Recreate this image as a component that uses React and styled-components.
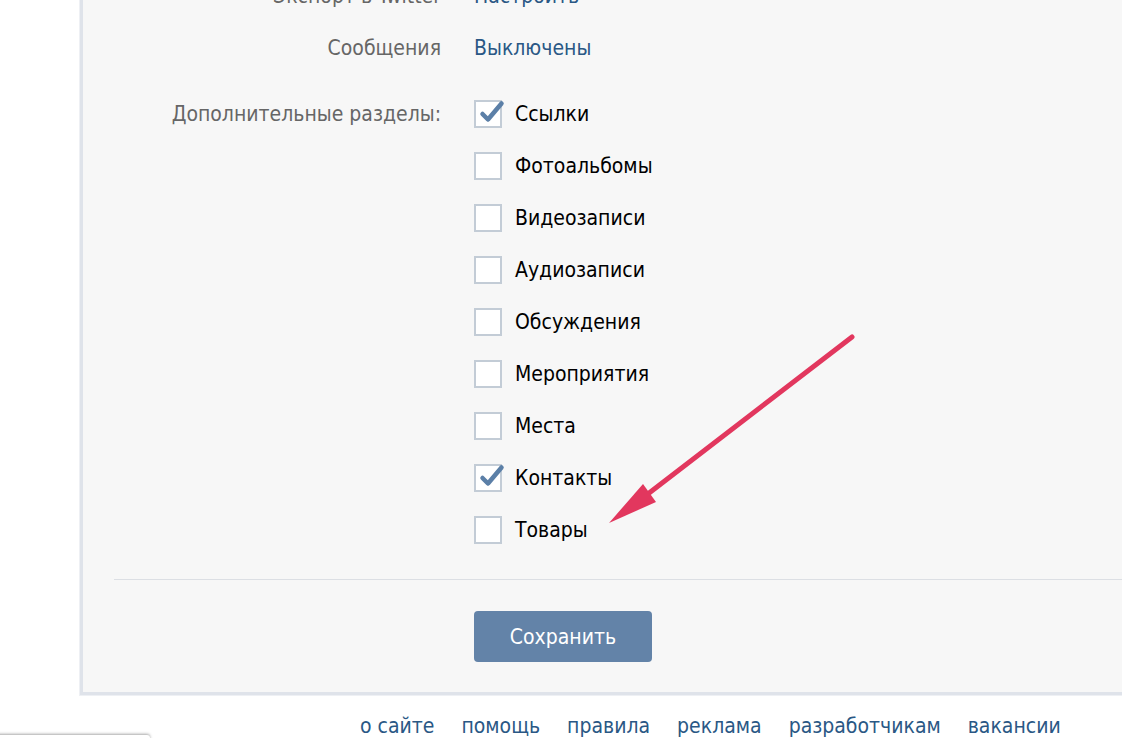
import styled, { createGlobalStyle } from 'styled-components'

const GlobalStyle = createGlobalStyle`
  html, body {
    margin: 0;
    padding: 0;
    background: #fff;
  }
  body {
    font-family: "DejaVu Sans Condensed", "DejaVu Sans", sans-serif;
  }
`

const Page = styled.div`
  position: relative;
  width: 1122px;
  height: 738px;
  overflow: hidden;
`

const Panel = styled.div`
  margin: -30px -40px 0 80px;
  background: #f7f7f7;
  border-left: 3px solid #dfe3ea;
  border-bottom: 3px solid #dfe3ea;
  box-shadow: -1px 1px 0 #eef0f4;
  padding-bottom: 30px;
`

const Form = styled.div`
  display: grid;
  grid-template-columns: 358px 1fr;
  column-gap: 33px;
`

const Label = styled.div`
  text-align: right;
  color: #666;
  font-size: 21px;
  line-height: 52px;
  margin-top: ${p => p.$top || 0}px;
`

const Value = styled.div`
  font-size: 21px;
  line-height: 52px;
  color: #2a5885;
  margin-top: ${p => p.$top || 0}px;
`

const CheckList = styled.div`
  display: flex;
  flex-direction: column;
  margin-top: ${p => p.$top || 0}px;
`

const CheckRow = styled.label`
  display: flex;
  align-items: center;
  gap: 13px;
  height: 52px;
  color: #000;
  font-size: 21px;
`

const Box = styled.span`
  position: relative;
  box-sizing: border-box;
  width: 28px;
  height: 28px;
  border: 2px solid #c3ccd6;
  background: #fff;

  svg {
    position: absolute;
    left: 2px;
    top: -3px;
  }
`

const Divider = styled.hr`
  border: 0;
  height: 1px;
  background: #dcdfe4;
  margin: 23px 0 31px 31px;
`

const ButtonRow = styled.div`
  padding-left: 391px;
`

const SaveButton = styled.button`
  width: 178px;
  height: 51px;
  border: 0;
  border-radius: 4px;
  background: #6383a8;
  color: #fff;
  font-family: inherit;
  font-size: 21px;
`

const Footer = styled.div`
  display: flex;
  gap: 27px;
  padding: 19px 0 0 360px;
`

const FooterLink = styled.a`
  color: #2a5885;
  font-size: 21px;
  text-decoration: none;
  white-space: nowrap;
`

const Arrow = styled.svg`
  position: absolute;
  left: 0;
  top: 0;
  pointer-events: none;
`

const ChatBar = styled.div`
  position: absolute;
  left: -10px;
  top: 735px;
  width: 160px;
  height: 20px;
  background: #fff;
  border-radius: 3px;
  box-shadow: 0 -1px 3px rgba(0, 0, 0, 0.35);
`

const Check = () => (
  <svg width="28" height="26" viewBox="0 0 28 26">
    <path d="M4.5 15 L10 20.5 L23.5 4.5" fill="none" stroke="#5b7fa7" strokeWidth="4.5" strokeLinecap="round" strokeLinejoin="round" />
  </svg>
)

const sections = [
  { name: 'Ссылки', on: true },
  { name: 'Фотоальбомы' },
  { name: 'Видеозаписи' },
  { name: 'Аудиозаписи' },
  { name: 'Обсуждения' },
  { name: 'Мероприятия' },
  { name: 'Места' },
  { name: 'Контакты', on: true },
  { name: 'Товары' },
]

const links = ['о сайте', 'помощь', 'правила', 'реклама', 'разработчикам', 'вакансии']

export default function App () {
  return (
    <Page>
      <GlobalStyle />
      <Panel>
        <Form>
          <Label>Экспорт в Twitter</Label>
          <Value>Настроить</Value>
          <Label>Сообщения</Label>
          <Value>Выключены</Value>
          <Label $top={14}>Дополнительные разделы:</Label>
          <CheckList $top={14}>
            {sections.map(s => (
              <CheckRow key={s.name}>
                <Box>{s.on && <Check />}</Box>
                {s.name}
              </CheckRow>
            ))}
          </CheckList>
        </Form>
        <Divider />
        <ButtonRow>
          <SaveButton>Сохранить</SaveButton>
        </ButtonRow>
      </Panel>
      <Footer>
        {links.map(l => <FooterLink key={l} href="#">{l}</FooterLink>)}
      </Footer>
      <Arrow width="1122" height="738">
        <line x1="852" y1="337" x2="640" y2="500" stroke="#e2375e" strokeWidth="5" strokeLinecap="round" />
        <polygon points="609,523 643,484 656,502" fill="#e2375e" />
      </Arrow>
      <ChatBar />
    </Page>
  )
}
